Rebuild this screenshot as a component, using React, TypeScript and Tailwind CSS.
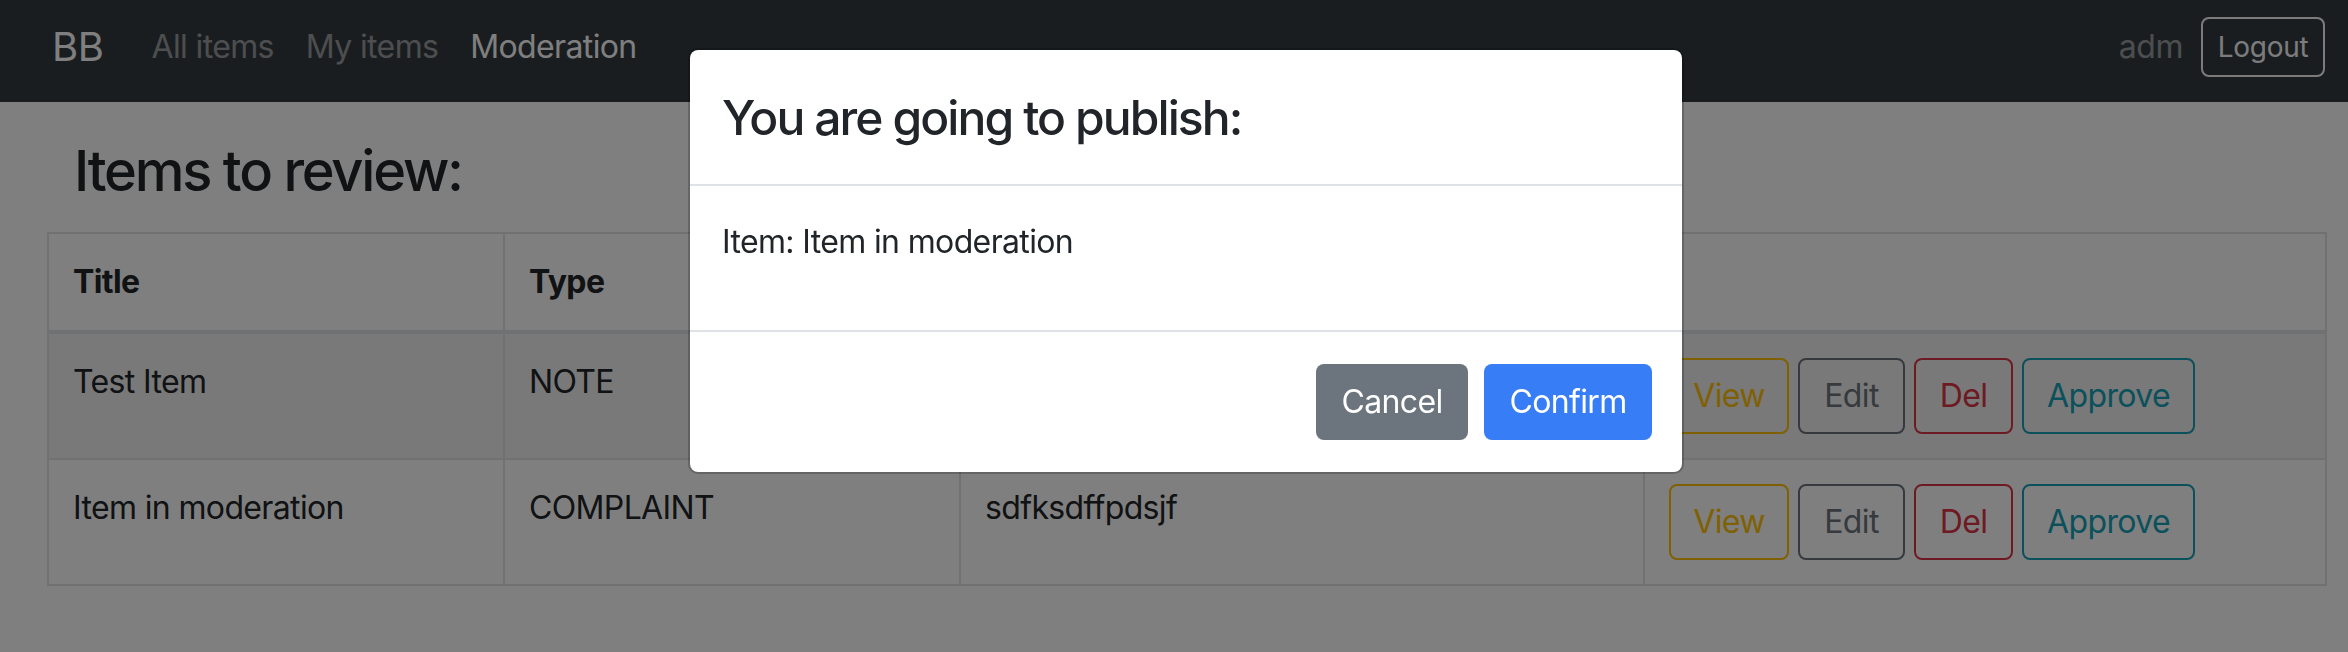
import React from "react";

function OutlineBtn({ label, w, cls }: { label: string; w: string; cls: string }) {
  return (
    <button
      className={`${w} h-[76px] shrink-0 rounded-[8px] border-2 bg-transparent text-[32px] leading-[48px] tracking-[-0.02em] ${cls}`}
    >
      {label}
    </button>
  );
}

function Actions() {
  return (
    <div className="flex gap-[9px]">
      <OutlineBtn label="View" w="w-[120px]" cls="border-[#ffc107] text-[#ffc107]" />
      <OutlineBtn label="Edit" w="w-[107px]" cls="border-[#6c757d] text-[#6c757d]" />
      <OutlineBtn label="Del" w="w-[99px]" cls="border-[#dc3545] text-[#dc3545]" />
      <OutlineBtn label="Approve" w="w-[173px]" cls="border-[#17a2b8] text-[#17a2b8]" />
    </div>
  );
}

const th = "border-2 border-b-4 border-[#dee2e6] p-[24px] text-left align-top font-bold";
const td = "border-2 border-[#dee2e6] p-[24px] align-top";

export default function App() {
  return (
    <div className="relative min-h-[652px] bg-white font-[Inter,'Noto_Sans',sans-serif] text-[#212529]">
      <nav className="flex h-[102px] items-center bg-[#343a40] pb-[8px] pl-[52px] pr-[23px]">
        <span className="mr-[32px] text-[40px] leading-[60px] tracking-[-0.01em] text-white">BB</span>
        <a className="px-[16px] text-[32px] leading-[48px] tracking-[-0.02em] text-white/50">All items</a>
        <a className="px-[16px] text-[32px] leading-[48px] tracking-[-0.02em] text-white/50">My items</a>
        <a className="px-[16px] text-[32px] leading-[48px] tracking-[-0.02em] text-white">Moderation</a>
        <div className="ml-auto flex items-center gap-[18px]">
          <span className="text-[32px] leading-[48px] tracking-[-0.015em] text-white/50">adm</span>
          <button className="h-[60px] w-[124px] rounded-[8px] border-2 border-[#f8f9fa] text-[28px] leading-[42px] tracking-[-0.01em] text-[#f8f9fa]">
            Logout
          </button>
        </div>
      </nav>

      <h3 className="mt-[36px] pl-[74px] text-[56px] font-medium leading-[67px] tracking-[-0.04em]">
        Items to review:
      </h3>

      <table className="ml-[47px] mt-[27px] w-[2278px] table-fixed border-collapse text-[32px] leading-[48px] tracking-[-0.02em]">
        <colgroup>
          <col className="w-[456px]" />
          <col className="w-[456px]" />
          <col className="w-[684px]" />
          <col className="w-[682px]" />
        </colgroup>
        <thead>
          <tr>
            <th className={th}>Title</th>
            <th className={th}>Type</th>
            <th className={th}>Description</th>
            <th className={th}></th>
          </tr>
        </thead>
        <tbody>
          <tr className="bg-black/5">
            <td className={td}>Test Item</td>
            <td className={td}>NOTE</td>
            <td className={td}>Test description</td>
            <td className={td}>
              <Actions />
            </td>
          </tr>
          <tr>
            <td className={td}>Item in moderation</td>
            <td className={td}>COMPLAINT</td>
            <td className={td}>sdfksdffpdsjf</td>
            <td className={td}>
              <Actions />
            </td>
          </tr>
        </tbody>
      </table>

      <div className="fixed inset-0 bg-black/50" />

      <div className="absolute left-[688px] top-[48px] w-[996px] rounded-[10px] border-2 border-black/20 bg-white bg-clip-padding">
        <div className="border-b-2 border-[#dee2e6] px-[32px] pb-[30px] pt-[32px]">
          <h4 className="text-[48px] font-medium leading-[72px] tracking-[-0.04em] text-[#212529]">
            You are going to publish:
          </h4>
        </div>
        <div className="px-[32px] pb-[64px] pt-[32px]">
          <p className="text-[32px] leading-[48px] tracking-[-0.02em] text-[#212529]">Item: Item in moderation</p>
        </div>
        <div className="flex justify-end gap-[16px] border-t-2 border-[#dee2e6] py-[32px] pr-[30px]">
          <button className="h-[76px] w-[152px] rounded-[8px] bg-[#6c757d] text-[32px] leading-[48px] tracking-[-0.02em] text-white">
            Cancel
          </button>
          <button className="h-[76px] w-[168px] rounded-[8px] bg-[#377df6] text-[32px] leading-[48px] tracking-[-0.02em] text-white">
            Confirm
          </button>
        </div>
      </div>
    </div>
  );
}
